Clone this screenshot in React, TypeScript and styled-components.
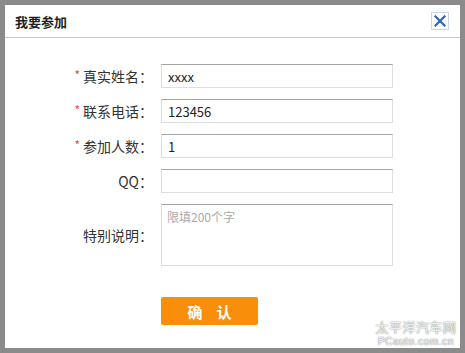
import React from "react";
import styled, { createGlobalStyle } from "styled-components";

const Global = createGlobalStyle`
  html, body { margin: 0; padding: 0; }
  body {
    background: #8b8b8b;
    font-family: "Microsoft YaHei", "Noto Sans CJK SC", "Liberation Sans", sans-serif;
    width: 465px;
    height: 353px;
    overflow: hidden;
  }
`;

const Overlay = styled.div`
  position: relative;
  padding: 5px;
  width: 465px;
  height: 353px;
  box-sizing: border-box;
`;

const Dialog = styled.div`
  width: 455px;
  height: 343px;
  background: #fff;
  display: flex;
  flex-direction: column;
`;

const Header = styled.div`
  height: 33px;
  border-bottom: 1px solid #c8c8c8;
  display: flex;
  align-items: center;
  justify-content: space-between;
  padding: 0 10px;
  box-sizing: border-box;
`;

const Title = styled.div`
  font-size: 13px;
  font-weight: bold;
  color: #222;
`;

const CloseBtn = styled.button`
  width: 18px;
  height: 18px;
  padding: 0;
  margin-right: 1px;
  border: 1px solid #cfd6e0;
  background: #fff;
  display: flex;
  align-items: center;
  justify-content: center;
  cursor: pointer;
`;

const Form = styled.div`
  padding-top: 26px;
  display: grid;
  grid-template-columns: 148px 232px;
  column-gap: 8px;
  row-gap: 11px;
  align-items: center;
`;

const Label = styled.div`
  font-size: 14px;
  color: #333;
  text-align: right;
  white-space: nowrap;
`;

const Star = styled.span`
  color: #e44;
  font-size: 12px;
  margin-right: 3px;
  vertical-align: 2px;
`;

const Input = styled.input`
  box-sizing: border-box;
  width: 232px;
  height: 24px;
  border: 1px solid #dedede;
  border-top-color: #a4a4a4;
  padding: 0 6px;
  font-size: 13px;
  color: #222;
  font-family: "Microsoft YaHei", "Noto Sans CJK SC", "Liberation Sans", sans-serif;
  outline: none;
`;

const Textarea = styled.textarea`
  box-sizing: border-box;
  width: 232px;
  height: 62px;
  border: 1px solid #dedede;
  border-top-color: #a4a4a4;
  padding: 3px 5px;
  font-size: 12px;
  resize: none;
  font-family: "Microsoft YaHei", "Noto Sans CJK SC", "Liberation Sans", sans-serif;
  outline: none;
  &::placeholder { color: #aaa; }
`;

const Footer = styled.div`
  padding: 31px 0 0 156px;
`;

const Submit = styled.button`
  width: 97px;
  height: 28px;
  border: none;
  border-radius: 2px;
  background: #f98e0a;
  color: #fff;
  font-size: 15px;
  font-weight: bold;
  letter-spacing: 14px;
  text-indent: 14px;
  font-family: "Microsoft YaHei", "Noto Sans CJK SC", "Liberation Sans", sans-serif;
  cursor: pointer;
`;

const Watermark = styled.div`
  position: absolute;
  right: 7px;
  bottom: 6px;
  width: 84px;
  display: flex;
  flex-direction: column;
  align-items: center;
  color: rgba(255, 255, 255, 0.9);
  text-shadow: 0 0 1px rgba(0, 0, 0, 0.5), 0 0 2px rgba(0, 0, 0, 0.3);
  pointer-events: none;
`;

const WmTitle = styled.span`
  display: block;
  font-size: 13px;
  line-height: 13px;
  height: 13px;
  margin-bottom: 4px;
  letter-spacing: 0.5px;
`;

const WmUrl = styled.span`
  display: block;
  font-family: "Liberation Sans", sans-serif;
  font-size: 10px;
  line-height: 10px;
  height: 10px;
  letter-spacing: 0.6px;
`;

export default function App() {
  return (
    <>
      <Global />
      <Overlay>
        <Dialog>
          <Header>
            <Title>我要参加</Title>
            <CloseBtn aria-label="关闭">
              <svg width="12" height="12" viewBox="0 0 12 12">
                <path d="M1.5 1.5 L10.5 10.5 M10.5 1.5 L1.5 10.5" stroke="#2f63b8" strokeWidth="2.2" strokeLinecap="square" />
              </svg>
            </CloseBtn>
          </Header>
          <Form>
            <Label><Star>*</Star>真实姓名：</Label>
            <Input defaultValue="xxxx" />
            <Label><Star>*</Star>联系电话：</Label>
            <Input defaultValue="123456" />
            <Label><Star>*</Star>参加人数：</Label>
            <Input defaultValue="1" />
            <Label>QQ：</Label>
            <Input />
            <Label>特别说明：</Label>
            <Textarea placeholder="限填200个字" />
          </Form>
          <Footer>
            <Submit>确认</Submit>
          </Footer>
        </Dialog>
        <Watermark>
          <WmTitle>太平洋汽车网</WmTitle>
          <WmUrl>PCauto.com.cn</WmUrl>
        </Watermark>
      </Overlay>
    </>
  );
}
